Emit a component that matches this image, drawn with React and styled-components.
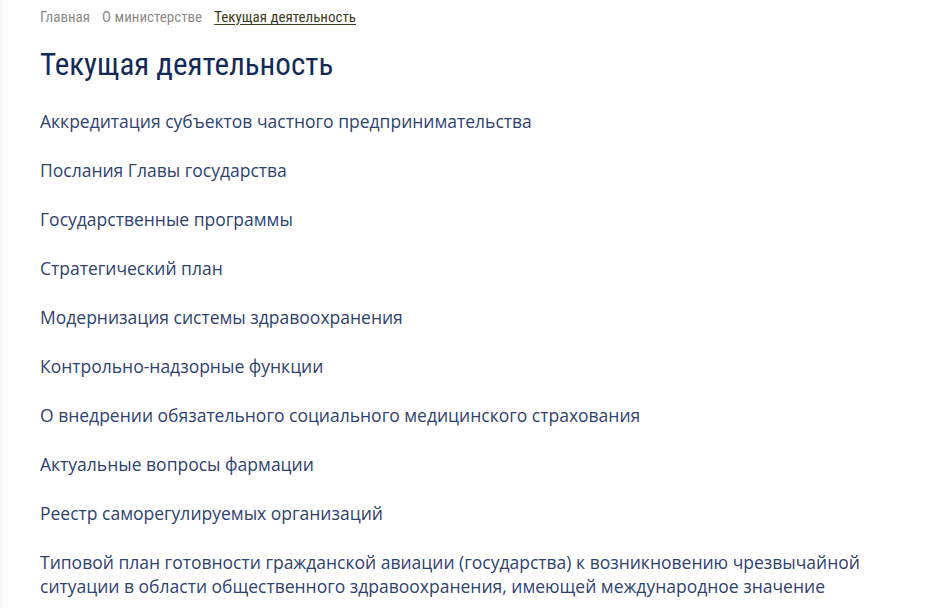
import React from "react";
import styled, { createGlobalStyle } from "styled-components";

const GlobalStyle = createGlobalStyle`
  body {
    margin: 0;
    background: #ffffff;
  }
`;

const crumbs = [
  { label: "Главная" },
  { label: "О министерстве" },
  { label: "Текущая деятельность", active: true },
];

const items = [
  "Аккредитация субъектов частного предпринимательства",
  "Послания Главы государства",
  "Государственные программы",
  "Стратегический план",
  "Модернизация системы здравоохранения",
  "Контрольно-надзорные функции",
  "О внедрении обязательного социального медицинского страхования",
  "Актуальные вопросы фармации",
  "Реестр саморегулируемых организаций",
  "Типовой план готовности гражданской авиации (государства) к возникновению чрезвычайной ситуации в области общественного здравоохранения, имеющей международное значение",
];

function App() {
  return (
    <>
      <GlobalStyle />
      <Page>
        <Breadcrumbs>
          {crumbs.map((c) => (
            <Crumb key={c.label} $active={c.active}>
              {c.label}
            </Crumb>
          ))}
        </Breadcrumbs>
        <Title>Текущая деятельность</Title>
        <List>
          {items.map((item) => (
            <li key={item}>
              <Link href="#">{item}</Link>
            </li>
          ))}
        </List>
      </Page>
    </>
  );
}

const Page = styled.div`
  min-height: 608px;
  padding: 8px 40px 0 40px;
  box-sizing: border-box;
  box-shadow: inset 6px 0 6px -4px rgba(0, 0, 0, 0.06);
`;

const Breadcrumbs = styled.nav`
  display: flex;
  gap: 12px;
  font-family: Roboto, "Liberation Sans", sans-serif;
  font-stretch: condensed;
  font-size: 15px;
  line-height: 18px;
`;

const Crumb = styled.a`
  color: ${(p) => (p.$active ? "#3d3d1e" : "#8c8c8c")};
  text-decoration: ${(p) => (p.$active ? "underline" : "none")};
  text-underline-offset: 2px;
`;

const Title = styled.h1`
  margin: 20px 0 25px;
  font-family: Roboto, "Liberation Sans", sans-serif;
  font-stretch: condensed;
  font-weight: 400;
  font-size: 31px;
  line-height: 38px;
  color: #142a56;
`;

const List = styled.ul`
  list-style: none;
  margin: 0;
  padding: 0;
  display: flex;
  flex-direction: column;
  gap: 25px;
  max-width: 860px;
`;

const Link = styled.a`
  font-family: "Open Sans", "Liberation Sans", sans-serif;
  font-size: 17.5px;
  line-height: 24px;
  color: #2f4270;
  text-decoration: none;
`;

export default App;
